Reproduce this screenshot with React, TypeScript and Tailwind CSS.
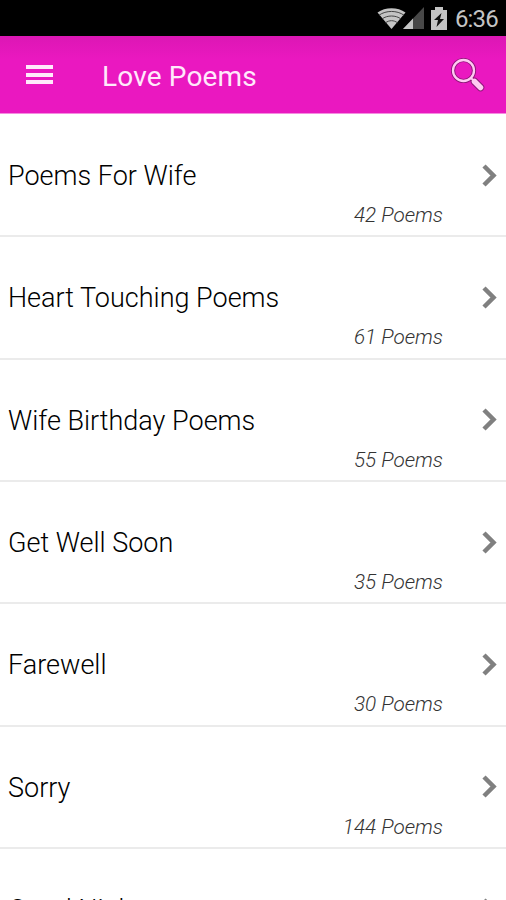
const categories = [
  { title: 'Poems For Wife', count: 42 },
  { title: 'Heart Touching Poems', count: 61 },
  { title: 'Wife Birthday Poems', count: 55 },
  { title: 'Get Well Soon', count: 35 },
  { title: 'Farewell', count: 30 },
  { title: 'Sorry', count: 144 },
  { title: 'Good Night', count: 48 }
];

function StatusBar() {
  return (
    <div className="flex h-9 shrink-0 items-center justify-end bg-black pr-2 text-[#c4c4c4]">
      <svg className="h-[21px] w-[29px]" viewBox="0 0 29 21" fill="none">
        <path d="M0.5 4.5C8-1.2 21-1.2 28.5 4.5L14.5 21Z" fill="currentColor" />
        <path d="M2 7.2C9 2.2 20 2.2 27 7.2M5 11C10 7 19 7 24 11M8.5 14.8C12 12 17 12 20.5 14.8" stroke="#444" strokeWidth="1" />
      </svg>
      <svg className="-ml-[3px] h-[22px] w-[21px]" viewBox="0 0 21 22">
        <path d="M0 22L21 0V22Z" fill="#484848" />
        <path d="M0 22L10 11.5V22Z" fill="currentColor" />
      </svg>
      <svg className="ml-[7px] h-[23px] w-4" viewBox="0 0 16 23">
        <path d="M4 0H12V3H16V23H0V3H4Z" fill="currentColor" />
        <path d="M10.5 6L3 13H7L5.5 20L13 12H9Z" fill="#111" />
      </svg>
      <span className="ml-2 pt-0.5 text-[24px] leading-8 tracking-[-0.8px]">6:36</span>
    </div>
  );
}

function Header() {
  return (
    <header className="flex h-[78px] shrink-0 items-center border-b border-[#f58be0] bg-linear-to-b from-[#dc17b4] to-[#ea18c0] to-30% pr-[21px] pl-[26px] text-[#ffe9fb]">
      <button className="flex w-[27px] flex-col gap-[3.5px]">
        <span className="h-[4px] bg-current" />
        <span className="h-[4px] bg-current" />
        <span className="h-[4px] bg-current" />
      </button>
      <h1 className="ml-[49px] pt-1 text-[28px] leading-8 tracking-[0.15px]">Love Poems</h1>
      <svg className="ml-auto h-[34px] w-[34px]" viewBox="0 0 34 34" fill="none" strokeLinecap="round">
        <circle cx="12.5" cy="12.5" r="10.5" stroke="#8d1677" strokeWidth="4.2" />
        <path d="M20 20L23 23" stroke="#8d1677" strokeWidth="4" />
        <path d="M23.5 23.5L29.5 29.5" stroke="#8d1677" strokeWidth="7.5" />
        <circle cx="12.5" cy="12.5" r="10.5" stroke="#ffc9f2" strokeWidth="2.3" />
        <path d="M20 20L23 23" stroke="#ffc9f2" strokeWidth="2" />
        <path d="M23.5 23.5L29.5 29.5" stroke="#ffc9f2" strokeWidth="5.5" />
      </svg>
    </header>
  );
}

export default function App() {
  return (
    <div className="flex h-[900px] w-full flex-col overflow-hidden bg-white font-['Roboto',sans-serif]">
      <StatusBar />
      <Header />
      <ul className="pt-px">
        {categories.map((category) => (
          <li key={category.title} className="h-[122.35px] border-b-2 border-[#ebebeb] pt-[45px] pr-[9px] pl-2">
            <div className="flex h-8 items-center justify-between">
              <h2 className="text-[27px] leading-8 font-light text-black">{category.title}</h2>
              <svg className="-mt-0.5 h-[23px] w-[15px]" viewBox="0 0 15 23" fill="none">
                <path d="M2 2L11.5 11.5L2 21" stroke="#808080" strokeWidth="4.5" />
              </svg>
            </div>
            <p className="mt-[11px] pr-[54px] text-right text-[20.7px] leading-6 font-light text-[#333] italic">
              {category.count} Poems
            </p>
          </li>
        ))}
      </ul>
    </div>
  );
}
